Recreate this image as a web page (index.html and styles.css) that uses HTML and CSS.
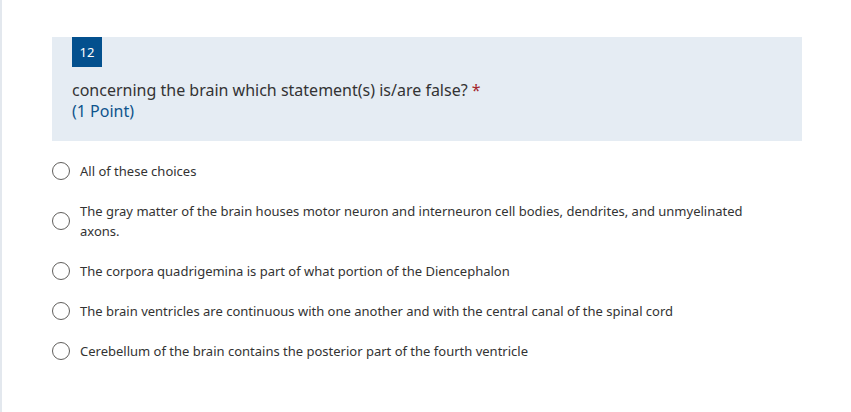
FILE: index.html
```html
<!DOCTYPE html>
<html>
<head>
<meta charset="utf-8">
<link rel="stylesheet" href="styles.css">
</head>
<body>
<div class="page">
  <div class="question">
    <div class="qhead">
      <div class="badge">12</div>
      <div class="qtitle">concerning the brain which statement(s) is/are false? <span class="req">*</span></div>
      <div class="points">(1 Point)</div>
    </div>
    <div class="options">
      <label class="opt"><span class="radio"></span><span class="otext">All of these choices</span></label>
      <label class="opt"><span class="radio"></span><span class="otext">The gray matter of the brain houses motor neuron and interneuron cell bodies, dendrites, and unmyelinated axons.</span></label>
      <label class="opt"><span class="radio"></span><span class="otext">The corpora quadrigemina is part of what portion of the Diencephalon</span></label>
      <label class="opt"><span class="radio"></span><span class="otext">The brain ventricles are continuous with one another and with the central canal of the spinal cord</span></label>
      <label class="opt"><span class="radio"></span><span class="otext">Cerebellum of the brain contains the posterior part of the fourth ventricle</span></label>
    </div>
  </div>
</div>
</body>
</html>
```
FILE: styles.css
```css
html, body {
  margin: 0;
  padding: 0;
  background: #ffffff;
}
body {
  font-family: "Noto Sans", "Open Sans", sans-serif;
  color: #333333;
}
.page {
  border-left: 2px solid #e3e8ee;
  min-height: 412px;
  box-sizing: border-box;
  padding: 37px 0 0 50px;
}
.question {
  width: 750px;
}
.qhead {
  background: #e5ecf3;
  padding: 0 20px 20px 20px;
  height: 104px;
  box-sizing: border-box;
}
.badge {
  width: 30px;
  height: 30px;
  background: #03508e;
  color: #ffffff;
  font-size: 13px;
  display: flex;
  align-items: center;
  justify-content: center;
}
.qtitle {
  margin-top: 13px;
  font-size: 16px;
  line-height: 21px;
  color: #333333;
}
.req {
  color: #a4262c;
}
.points {
  font-size: 16px;
  line-height: 21px;
  color: #0f548c;
}
.options {
  padding: 20px 0 0 0;
  display: flex;
  flex-direction: column;
  gap: 20px;
}
.opt {
  display: flex;
  align-items: center;
  gap: 10px;
}
.radio {
  flex: none;
  width: 18px;
  height: 18px;
  border: 1px solid #605e5c;
  border-radius: 50%;
  box-sizing: border-box;
}
.otext {
  font-size: 13px;
  line-height: 20px;
  color: #333333;
  max-width: 672px;
}
```
